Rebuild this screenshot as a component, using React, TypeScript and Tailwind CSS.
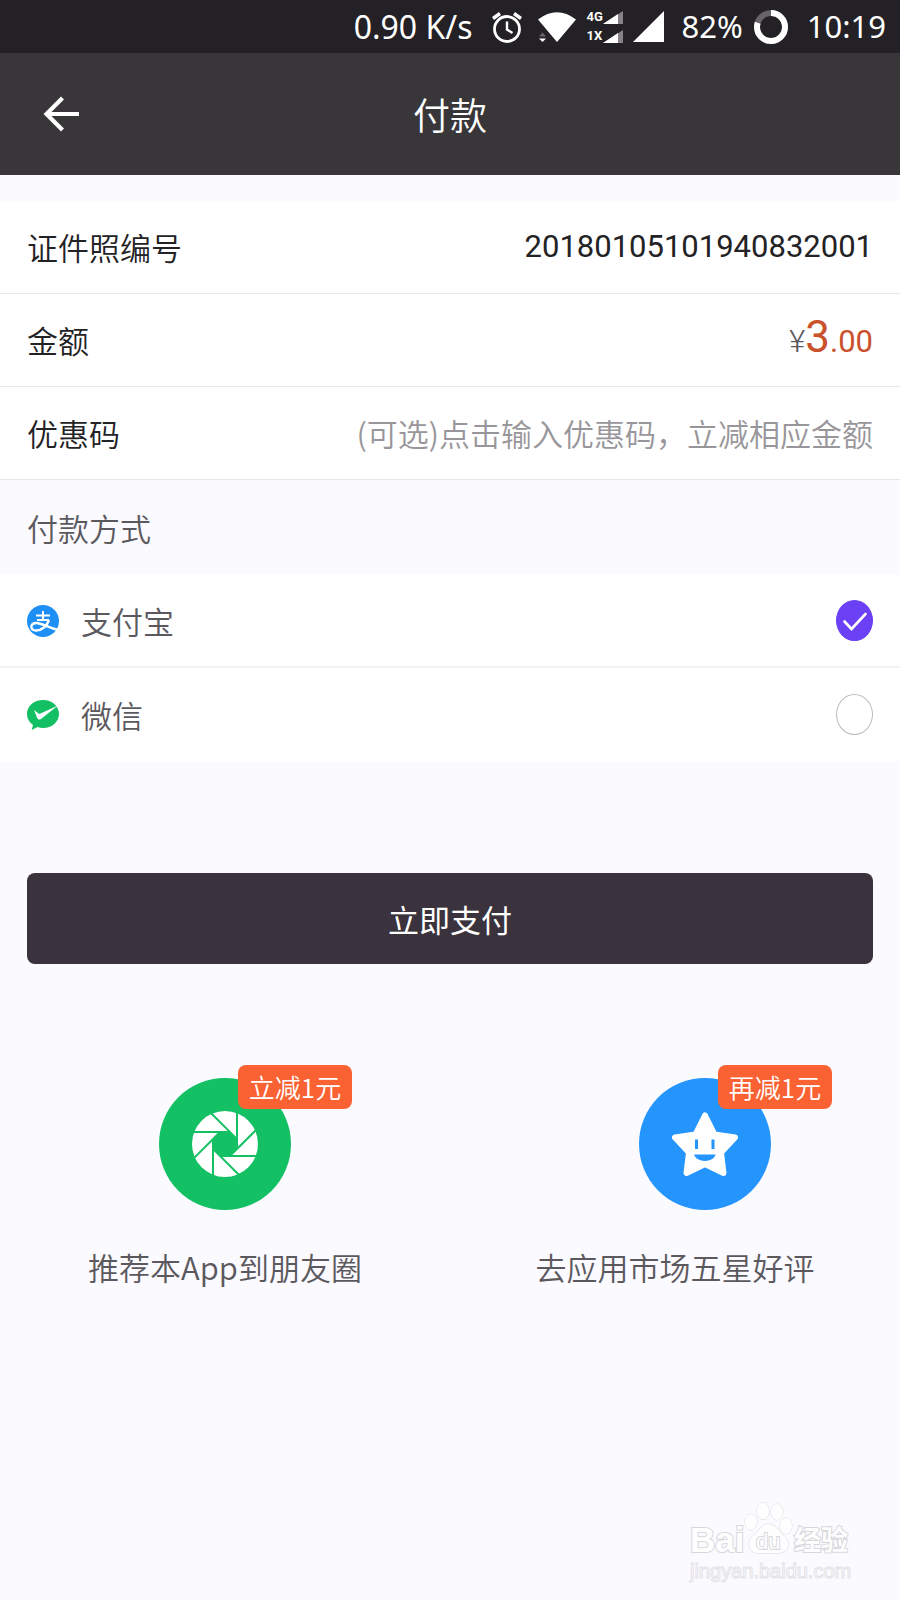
import { useState } from 'react';
import type { ReactNode } from 'react';

type PayMethod = 'alipay' | 'wechat';

function AlarmIcon() {
  return (
    <svg width="32" height="32" viewBox="0 0 32 32" fill="none" stroke="#fff" className="flex-shrink-0">
      <circle cx="16" cy="18" r="12.500" strokeWidth="2.8" />
      <path d="M16 10.500v8l5.500 3.500" strokeWidth="2.4" />
      <path d="M2 7.500l7-5M30 7.500l-7-5" strokeWidth="3.4" />
    </svg>
  );
}

function WifiIcon() {
  return (
    <svg width="40" height="32" viewBox="0 0 40 32" className="flex-shrink-0">
      <path d="M1 8.500Q20-6 39 8.500L20 31z" fill="#fff" />
      <path d="M2 25.500l3.500-4 3.500 4z" fill="#666468" />
      <path d="M2 27.500l3.500 3.500 3.500-3.500z" fill="#fff" />
    </svg>
  );
}

function MiniSignal() {
  return (
    <svg width="20" height="13" viewBox="0 0 20 13">
      <path d="M0 13L20 0v13z" fill="#858388" />
      <path d="M0 13L15 3v10z" fill="#fff" />
    </svg>
  );
}

function StatusBar() {
  return (
    <div className="flex h-[53px] items-center justify-end bg-[#232125] pr-[14px] font-['Noto_Sans'] text-[31px] font-normal leading-none text-white">
      <span className="text-[32px]">0.90 K/s</span>
      <span className="ml-[18px] flex items-center">
        <AlarmIcon />
      </span>
      <span className="ml-[14px] flex items-center">
        <WifiIcon />
      </span>
      <div className="ml-[10px] flex flex-col gap-[3px] font-['Roboto'] text-[13px] font-bold leading-4">
        <span className="flex items-center">
          <span className="w-4">4G</span>
          <MiniSignal />
        </span>
        <span className="flex items-center">
          <span className="w-4">1X</span>
          <MiniSignal />
        </span>
      </div>
      <svg width="31" height="31" viewBox="0 0 31 31" className="ml-[10px] flex-shrink-0">
        <path d="M0 31L31 0v31z" fill="#fff" />
      </svg>
      <span className="ml-[18px]">82%</span>
      <svg width="36" height="36" viewBox="0 0 36 36" fill="none" strokeWidth="6" className="ml-[10px] flex-shrink-0">
        <circle cx="18" cy="18" r="14" stroke="#666468" />
        <circle cx="18" cy="18" r="14" stroke="#fff" pathLength="100" strokeDasharray="80 20" transform="rotate(-90 18 18)" />
      </svg>
      <span className="ml-[18px]">10:19</span>
    </div>
  );
}

function AlipayIcon() {
  return (
    <svg width="32" height="32" viewBox="0 0 32 32" className="flex-shrink-0">
      <circle cx="16" cy="16" r="16" fill="#1e90f5" />
      <g fill="none" stroke="#fff" strokeWidth="2">
        <path d="M9 10.500h14M16 6v9M10 15h12" />
        <path d="M22 15C20 21 15 25.500 9 25.500C2.500 25.500 3 18 9.500 18C15 18 21 23 31.500 25" strokeWidth="2.400" />
      </g>
    </svg>
  );
}

function WechatIcon() {
  return (
    <svg width="32" height="32" viewBox="0 0 32 32" className="flex-shrink-0">
      <path d="M16 1C7 1 0 7 0 15c0 4.500 2.300 8.400 6 11l-1.300 5L10.500 28c1.700.6 3.600 1 5.500 1c9 0 16-6.200 16-14S25 1 16 1z" fill="#12bf63" />
      <path d="M7 11l4.500 3.500c.6.400 1.300.4 2 .1L31 6.500L14 20c-1.500 1-2.900.8-3.700-.8z" fill="#fff" />
    </svg>
  );
}

const BLADES = [0, 45, 90, 135, 180, 225, 270, 315];

function ApertureIcon() {
  return (
    <svg width="68" height="68" viewBox="-34 -34 68 68">
      <circle r="33" fill="#fff" />
      <path d="M-5-12H5L12-5V5L5 12H-5L-12 5V-5z" fill="#14c064" />
      {BLADES.map((deg) => (
        <path key={deg} d="M-33-12H4" stroke="#14c064" strokeWidth="2" transform={`rotate(${deg})`} />
      ))}
    </svg>
  );
}

function StarIcon() {
  return (
    <svg width="68" height="68" viewBox="-34 -34 68 68">
      <path
        d="M0-28.500L9.500-9.500L30-6.500L16 8.500L18.500 29L0 20L-18.500 29L-16 8.500L-30-6.500L-9.500-9.500z"
        fill="#fff"
        stroke="#fff"
        strokeWidth="6"
        strokeLinejoin="round"
      />
      <path d="M-8.500-4.500V5M8-4.500V5" stroke="#2495fd" strokeWidth="3" />
      <path d="M-11 10.500H10.500C8.500 19-8.500 19-11 10.500z" fill="#2495fd" />
    </svg>
  );
}

function Row({ label, htmlFor, children }: { label: string; htmlFor?: string; children: ReactNode }) {
  return (
    <div className="flex h-[93px] items-center justify-between border-b border-[#e7e6e9] px-[27px] text-[#232225]">
      {htmlFor ? <label htmlFor={htmlFor}>{label}</label> : <span>{label}</span>}
      {children}
    </div>
  );
}

const METHODS: { id: PayMethod; label: string; icon: ReactNode }[] = [
  { id: 'alipay', label: '支付宝', icon: <AlipayIcon /> },
  { id: 'wechat', label: '微信', icon: <WechatIcon /> },
];

interface PromoProps {
  badge: string;
  label: string;
  color: string;
  shifted?: boolean;
  children: ReactNode;
}

function Promo({ badge, label, color, shifted, children }: PromoProps) {
  return (
    <button type="button" className="flex flex-col items-center gap-[34px]">
      <span className={shifted ? 'pl-[60px]' : ''}>
        <span className={`relative flex size-[132px] items-center justify-center rounded-full ${color}`}>
          {children}
          <span className="absolute -top-[13px] left-[79px] flex h-11 w-[114px] items-center justify-center rounded-lg bg-[#fb6233] text-[26px] leading-none text-white">
            {badge}
          </span>
        </span>
      </span>
      <span className="leading-[46px] text-[#5b595e]">{label}</span>
    </button>
  );
}

function Watermark() {
  return (
    <div className="flex w-[164px] flex-col text-[#fefefe]">
      <svg width="164" height="60" viewBox="0 0 164 60" fill="#fefefe" stroke="#d8d7dc" strokeWidth="1" paintOrder="stroke">
        <text x="0" y="51" fontFamily="Liberation Sans" fontWeight="700" fontSize="35" strokeWidth="2">Bai</text>
        <ellipse cx="61" cy="21" rx="6" ry="8" />
        <ellipse cx="73" cy="10" rx="6" ry="8.500" />
        <ellipse cx="87" cy="11" rx="6" ry="8" />
        <ellipse cx="96" cy="25" rx="6" ry="8" />
        <path d="M78 23C71 23 69 30 64 34C56 40 58 52 68 52C74 52 82 52 88 52C100 52 101 40 93 34C88 30 86 23 78 23z" />
        <text x="66" y="48" fontFamily="Liberation Sans" fontSize="22" strokeWidth="2">du</text>
        <text x="104" y="49" fontFamily="Noto Sans CJK SC" fontWeight="700" fontSize="27" strokeWidth="2">经验</text>
      </svg>
      <span className="font-['Liberation_Sans'] text-[20px] leading-5 [-webkit-text-stroke:1px_#e4e3e7]">jingyan.baidu.com</span>
    </div>
  );
}

export default function App() {
  const [method, setMethod] = useState<PayMethod>('alipay');
  const [coupon, setCoupon] = useState('');

  return (
    <div className="flex min-h-screen flex-col bg-[#fbfaff] font-['Noto_Sans_CJK_SC',sans-serif] text-[31px] font-[350] leading-[46px]">
      <StatusBar />
      <header className="grid h-[122px] grid-cols-[1fr_auto_1fr] items-center bg-[#39363a] px-[43px] text-white">
        <button type="button" aria-label="返回" className="justify-self-start">
          <svg width="36" height="36" viewBox="0 0 36 36" fill="none" stroke="#fff" strokeWidth="4.200">
            <path d="M36 18H4M19.500 2L3.500 18l16 16" />
          </svg>
        </button>
        <h1 className="text-[37px] font-[350]">付款</h1>
      </header>

      <section className="mt-[26px] bg-white">
        <Row label="证件照编号">
          <span className="font-['Roboto'] font-normal">20180105101940832001</span>
        </Row>
        <Row label="金额">
          <span className="font-['Roboto'] font-normal text-[#c9512b]">
            <span className="font-light text-[#5b595e]">¥</span>
            <span className="text-[44px] leading-none">3</span>.00
          </span>
        </Row>
        <Row label="优惠码" htmlFor="coupon">
          <input
            id="coupon"
            value={coupon}
            onChange={(e) => setCoupon(e.target.value)}
            placeholder="(可选)点击输入优惠码，立减相应金额"
            className="min-w-0 flex-1 bg-transparent text-right outline-none placeholder:text-[#98969a]"
          />
        </Row>
      </section>

      <fieldset>
        <legend className="flex h-[95px] items-center px-[27px] text-[#5b595e]">付款方式</legend>
        <div className="divide-y-2 divide-[#f3f2f4] bg-white">
          {METHODS.map((m) => (
            <label key={m.id} className="flex h-[93px] items-center px-[27px] text-[#5b595e]">
              {m.icon}
              <span className="ml-[22px] flex-1">{m.label}</span>
              <span className="relative flex">
                <input
                  type="radio"
                  name="method"
                  checked={method === m.id}
                  onChange={() => setMethod(m.id)}
                  className="h-[41px] w-[37px] appearance-none rounded-[50%] border border-[#bcbabf] checked:border-[#6c40f5] checked:bg-[#6c40f5]"
                />
                {method === m.id && (
                  <svg viewBox="0 0 37 41" fill="none" stroke="#fff" strokeWidth="2.600" strokeLinecap="round" className="pointer-events-none absolute inset-0">
                    <path d="M8.500 21.500l7 7.500L29.500 14" />
                  </svg>
                )}
              </span>
            </label>
          ))}
        </div>
      </fieldset>

      <button type="button" className="mx-[27px] mt-28 h-[91px] rounded-lg bg-[#3a323c] font-normal text-white">
        立即支付
      </button>

      <div className="mt-[114px] grid grid-cols-2">
        <Promo badge="立减1元" label="推荐本App到朋友圈" color="bg-[#14c064]">
          <ApertureIcon />
        </Promo>
        <Promo badge="再减1元" label="去应用市场五星好评" color="bg-[#2495fd]" shifted>
          <StarIcon />
        </Promo>
      </div>

      <footer className="mt-auto flex justify-end pb-[19px] pr-[46px]">
        <Watermark />
      </footer>
    </div>
  );
}
